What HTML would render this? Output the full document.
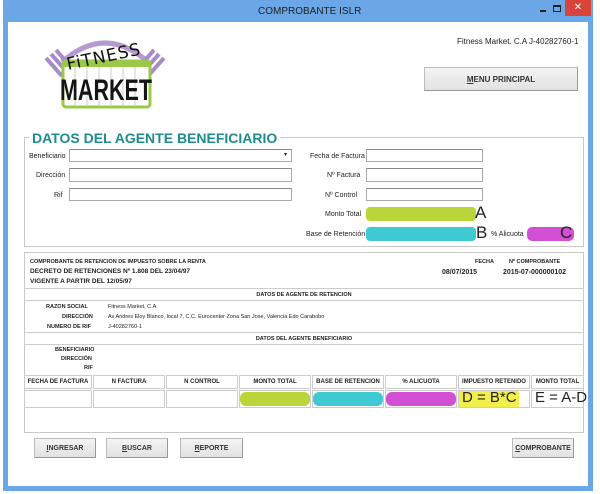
<!DOCTYPE html>
<html><head><meta charset="utf-8"><style>
*{margin:0;padding:0;box-sizing:border-box}
body{width:600px;height:494px;background:#fff;position:relative;overflow:hidden;font-family:"Liberation Sans",sans-serif;color:#222}
.a{position:absolute}
.t{position:absolute;font-size:7px;white-space:nowrap}
.in{position:absolute;border:1px solid #aaa;border-top-color:#888;background:#fff}
.btn{position:absolute;background:linear-gradient(#f4f4f4,#e2e2e2);border:1px solid #bbb;border-right-color:#999;border-bottom-color:#999;font-size:7px;font-weight:bold;display:flex;align-items:center;justify-content:center;color:#333}
.pill{position:absolute;border-radius:6px}
.b{font-weight:bold}
.cell{position:absolute;border:1px solid #ccc;font-size:6px;font-weight:bold;display:flex;align-items:center;justify-content:center}
</style></head><body>
<div class="a" style="left:3px;top:0;width:590px;height:491px;background:#6ba7e6"></div>
<div class="a" style="left:8px;top:22px;width:580px;height:464px;background:#fff"></div>
<div class="t" style="left:258px;top:6px;font-size:10px;color:#222">COMPROBANTE ISLR</div>
<div class="a" style="left:540px;top:10px;width:6px;height:1.5px;background:#222"></div>
<div class="a" style="left:553px;top:5px;width:8px;height:7px;border:1px solid #222;border-top-width:2px"></div>
<div class="a" style="left:565px;top:0;width:26px;height:16px;background:#d9443a;color:#fff;font-size:10px;text-align:center;line-height:16px">✕</div>

<svg class="a" style="left:40px;top:32px" width="130" height="80" viewBox="0 0 130 80">
<path d="M22 30 Q65 -8 108 30" stroke="#b49ad0" stroke-width="5" fill="none"/>
<g stroke="#a88cc8" stroke-width="4"><line x1="6" y1="26" x2="22" y2="44"/><line x1="11" y1="22" x2="27" y2="40"/><line x1="16" y1="18" x2="31" y2="35"/><line x1="124" y1="26" x2="108" y2="44"/><line x1="119" y1="22" x2="103" y2="40"/><line x1="114" y1="18" x2="99" y2="35"/></g>
<rect x="23" y="29" width="87" height="46" fill="#fff" stroke="#9cc84a" stroke-width="3" rx="3"/>
<rect x="23" y="29" width="87" height="6" fill="#9cc84a"/>
<g stroke="#ccc" stroke-width="1"><line x1="35" y1="35" x2="35" y2="74"/><line x1="47" y1="35" x2="47" y2="74"/><line x1="59" y1="35" x2="59" y2="74"/><line x1="71" y1="35" x2="71" y2="74"/><line x1="83" y1="35" x2="83" y2="74"/><line x1="95" y1="35" x2="95" y2="74"/></g>
<text x="28" y="38" font-family="DejaVu Sans" font-size="17" fill="#111" transform="rotate(-12 28 38)" letter-spacing="1">FiTNESS</text>
<text x="66" y="68" text-anchor="middle" font-family="Liberation Sans" font-weight="bold" font-size="30" fill="#151515" textLength="92" lengthAdjust="spacingAndGlyphs">MARKET</text>
</svg>

<div class="t" style="left:457px;top:37px;font-size:8px">Fitness Market. C.A J-40282760-1</div>
<div class="btn" style="left:424px;top:67px;width:154px;height:24px;font-size:8px"><u>M</u>ENU PRINCIPAL</div>

<div class="a" style="left:24px;top:137px;width:560px;height:110px;border:1px solid #c8c8c8"></div>
<div class="t" style="left:29px;top:130px;background:#fff;padding:0 3px;font-size:14px;font-weight:bold;color:#1e8c8c">DATOS DEL AGENTE BENEFICIARIO</div>
<div class="t" style="left:29px;top:153px">Beneficiario</div>
<div class="in" style="left:69px;top:149px;width:223px;height:13px"></div>
<div class="a" style="left:284px;top:151px;font-size:6px">▾</div>
<div class="t" style="left:36px;top:172px">Dirección</div>
<div class="in" style="left:69px;top:168px;width:223px;height:14px"></div>
<div class="t" style="left:54px;top:192px">Rif</div>
<div class="in" style="left:69px;top:188px;width:223px;height:13px"></div>

<div class="t" style="left:310px;top:153px">Fecha de Factura</div>
<div class="in" style="left:366px;top:149px;width:117px;height:13px"></div>
<div class="t" style="left:327px;top:172px">Nº Factura</div>
<div class="in" style="left:366px;top:168px;width:117px;height:14px"></div>
<div class="t" style="left:325px;top:192px">Nº Control</div>
<div class="in" style="left:366px;top:188px;width:117px;height:13px"></div>
<div class="t" style="left:325px;top:211px">Monto Total</div>
<div class="pill" style="left:366px;top:207px;width:110px;height:14px;background:#b9d53a;border-radius:4px"></div>
<div class="t" style="left:475px;top:203px;font-size:17px">A</div>
<div class="t" style="left:306px;top:231px">Base de Retención</div>
<div class="pill" style="left:366px;top:227px;width:110px;height:14px;background:#3fc9d3;border-radius:4px"></div>
<div class="t" style="left:476px;top:223px;font-size:17px">B</div>
<div class="t" style="left:491px;top:231px">% Alicuota</div>
<div class="pill" style="left:527px;top:227px;width:47px;height:14px;background:#d24fd3;border-radius:5px"></div>
<div class="t" style="left:560px;top:223px;font-size:17px">C</div>

<div class="a" style="left:24px;top:252px;width:560px;height:181px;border:1px solid #c8c8c8"></div>
<div class="t b" style="left:30px;top:259px;font-size:5.5px">COMPROBANTE DE RETENCION DE IMPUESTO SOBRE LA RENTA</div>
<div class="t b" style="left:30px;top:268px;font-size:6.5px">DECRETO DE RETENCIONES Nº 1.808 DEL 23/04/97</div>
<div class="t b" style="left:30px;top:278px;font-size:6.5px">VIGENTE A PARTIR DEL 12/05/97</div>
<div class="t b" style="left:475px;top:259px;font-size:5.5px">FECHA</div>
<div class="t b" style="left:509px;top:259px;font-size:5.5px">Nº COMPROBANTE</div>
<div class="t b" style="left:442px;top:269px;font-size:7px">08/07/2015</div>
<div class="t b" style="left:503px;top:269px;font-size:7px">2015-07-000000102</div>
<div class="cell" style="left:24px;top:288px;width:560px;height:13px;font-size:5.5px">DATOS DE AGENTE DE RETENCION</div>
<div class="t b" style="left:46px;top:304px;font-size:5.5px">RAZON SOCIAL</div>
<div class="t b" style="left:62px;top:314px;font-size:5.5px">DIRECCIÓN</div>
<div class="t b" style="left:47px;top:324px;font-size:5.5px">NUMERO DE RIF</div>
<div class="t" style="left:108px;top:304px;font-size:5.5px">Fitness Market, C.A</div>
<div class="t" style="left:108px;top:314px;font-size:5.5px">Av Andres Eloy Blanco, local 7, C.C. Eurocenter Zona San Jose, Valencia Edo Carabobo</div>
<div class="t" style="left:108px;top:324px;font-size:5.5px">J-40282760-1</div>
<div class="cell" style="left:24px;top:332px;width:560px;height:13px;font-size:5.5px">DATOS DEL AGENTE BENEFICIARIO</div>
<div class="t b" style="left:55px;top:347px;font-size:5.5px">BENEFICIARIO</div>
<div class="t b" style="left:61px;top:356px;font-size:5.5px">DIRECCIÓN</div>
<div class="t b" style="left:84px;top:365px;font-size:5.5px">RIF</div>

<div class="cell" style="left:24px;top:375px;width:68px;height:14px">FECHA DE FACTURA</div>
<div class="cell" style="left:93px;top:375px;width:72px;height:14px">N FACTURA</div>
<div class="cell" style="left:166px;top:375px;width:72px;height:14px">N CONTROL</div>
<div class="cell" style="left:239px;top:375px;width:72px;height:14px">MONTO TOTAL</div>
<div class="cell" style="left:312px;top:375px;width:72px;height:14px">BASE DE RETENCION</div>
<div class="cell" style="left:385px;top:375px;width:72px;height:14px">% ALICUOTA</div>
<div class="cell" style="left:458px;top:375px;width:72px;height:14px">IMPUESTO RETENIDO</div>
<div class="cell" style="left:531px;top:375px;width:53px;height:14px">MONTO TOTAL</div>
<div class="cell" style="left:24px;top:390px;width:68px;height:18px"></div>
<div class="cell" style="left:93px;top:390px;width:72px;height:18px"></div>
<div class="cell" style="left:166px;top:390px;width:72px;height:18px"></div>
<div class="cell" style="left:239px;top:390px;width:72px;height:18px"></div>
<div class="cell" style="left:312px;top:390px;width:72px;height:18px"></div>
<div class="cell" style="left:385px;top:390px;width:72px;height:18px"></div>
<div class="cell" style="left:458px;top:390px;width:72px;height:18px"></div>
<div class="cell" style="left:531px;top:390px;width:53px;height:18px"></div>
<div class="pill" style="left:240px;top:392px;width:70px;height:14px;background:#b9d53a"></div>
<div class="pill" style="left:313px;top:392px;width:70px;height:14px;background:#3fc9d3"></div>
<div class="pill" style="left:386px;top:392px;width:70px;height:14px;background:#d24fd3"></div>
<div class="a" style="left:459px;top:391px;width:60px;height:16px;background:#f2ef4a"></div>
<div class="t" style="left:462px;top:389px;font-size:15px">D = B*C</div>
<div class="t" style="left:535px;top:389px;font-size:15px">E = A-D</div>

<div class="btn" style="left:34px;top:438px;width:62px;height:20px"><u>I</u>NGRESAR</div>
<div class="btn" style="left:106px;top:438px;width:62px;height:20px"><u>B</u>USCAR</div>
<div class="btn" style="left:180px;top:438px;width:63px;height:20px"><u>R</u>EPORTE</div>
<div class="btn" style="left:512px;top:438px;width:62px;height:20px"><u>C</u>OMPROBANTE</div>
</body></html>
